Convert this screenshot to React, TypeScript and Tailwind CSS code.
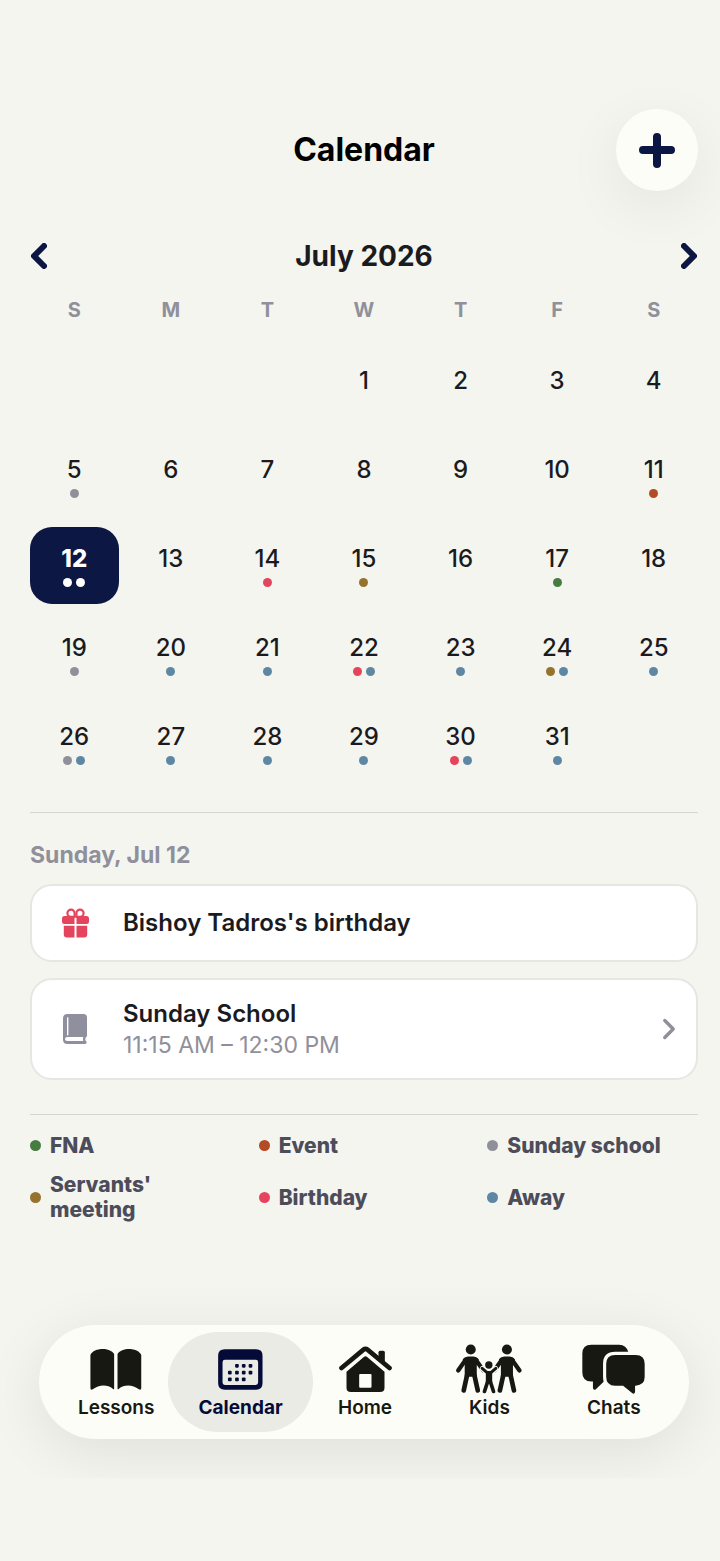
import { useState } from 'react'

type Kind = 'fna' | 'event' | 'school' | 'servants' | 'birthday' | 'away'

const dotColors: Record<Kind, string> = {
    fna: 'bg-[#457c40]',
    event: 'bg-[#b34b24]',
    school: 'bg-[#90909b]',
    servants: 'bg-[#95732c]',
    birthday: 'bg-[#e5445d]',
    away: 'bg-[#5e87a4]',
}

const legend: { kind: Kind; label: string }[] = [
    { kind: 'fna', label: 'FNA' },
    { kind: 'event', label: 'Event' },
    { kind: 'school', label: 'Sunday school' },
    { kind: 'servants', label: "Servants' meeting" },
    { kind: 'birthday', label: 'Birthday' },
    { kind: 'away', label: 'Away' },
]

const weekdays = ['S', 'M', 'T', 'W', 'T', 'F', 'S']

// July 2026 starts on a Wednesday
const leadingBlanks = 3
const daysInMonth = 31

const marks: Record<number, Kind[]> = {
    5: ['school'],
    11: ['event'],
    12: ['birthday', 'school'],
    14: ['birthday'],
    15: ['servants'],
    17: ['fna'],
    19: ['school'],
    20: ['away'],
    21: ['away'],
    22: ['birthday', 'away'],
    23: ['away'],
    24: ['servants', 'away'],
    25: ['away'],
    26: ['school', 'away'],
    27: ['away'],
    28: ['away'],
    29: ['away'],
    30: ['birthday', 'away'],
    31: ['away'],
}

function Chevron({ dir, className }: { dir: 'left' | 'right'; className: string }) {
    return (
        <svg viewBox="0 0 16 26" fill="none" stroke="currentColor" strokeLinecap="round" strokeLinejoin="round" className={className} aria-hidden="true">
            <path d={dir === 'left' ? 'M13 3 3 13l10 10' : 'M3 3l10 10L3 23'} />
        </svg>
    )
}

function GiftIcon() {
    return (
        <svg viewBox="0 0 27 30" className="h-[30px] w-[27px] text-[#e5445d]" fill="currentColor" aria-hidden="true">
            <g fill="none" stroke="currentColor" strokeWidth="2.2">
                <path d="M12.6 8.6V5.2a3.6 3.6 0 1 0-3.6 3.6Z" />
                <path d="M14.4 8.6V5.2A3.6 3.6 0 1 1 18 8.8Z" />
            </g>
            <path d="M2.6 8H12.5v8H2.2Q0 16 0 13.8v-3.2Q0 8 2.6 8Z" />
            <path d="M24.4 8H14.5v8h10.3Q27 16 27 13.8v-3.2Q27 8 24.4 8Z" />
            <path d="M1.8 17.8H12.5v11.7H5q-3.2 0-3.2-3.2Z" />
            <path d="M25.2 17.8H14.5v11.7H22q3.2 0 3.2-3.2Z" />
        </svg>
    )
}

function BookIcon() {
    return (
        <svg viewBox="0 0 24 30" className="h-[30px] w-6 text-[#8f8f9e]" aria-hidden="true">
            <path fill="currentColor" d="M4.5 0h16Q24 0 24 3.5v18q0 1.5-1.4 2.3-.6 1.6.2 3.2 1 .5.9 1.6-.2 1.4-1.6 1.4H4.5Q0 30 0 25.5v-21Q0 0 4.5 0Z" />
            <path fill="#fff" d="M4 3.5q.7-.6 1.4 0v17.7l-1.4.3Z" />
            <path fill="#fff" d="M4.2 23h16.1q-.8 2 0 4H4.2Q2 27 2 25t2.2-2Z" />
        </svg>
    )
}

function LessonsIcon() {
    return (
        <svg viewBox="207 116 151 121" className="h-[41px] w-[52px]" fill="currentColor" aria-hidden="true">
            <path d="M207 134C216 112 264 110 277 131V233Q276 236 273 233C258 220 232 220 214 235Q207 238 207 231Z" />
            <path d="M287 131C300 110 348 112 357 134V231Q357 238 350 235C332 220 306 220 291 233Q288 236 287 233Z" />
        </svg>
    )
}

function CalendarIcon() {
    const dots = [[111, 165], [131, 165], [151, 165], [90, 185], [111, 185], [131, 185], [151, 185], [90, 205], [111, 205], [131, 205]]
    return (
        <svg viewBox="56 116 132 121" className="h-[41px] w-[45px]" fill="currentColor" aria-hidden="true">
            <path fillRule="evenodd" d="M76 117h92q19 0 19 19v81q0 19-19 19H76q-20 0-20-19v-81q0-19 20-19Zm0 31q-7 0-7 7v60q0 7 7 7h91q7 0 7-7v-60q0-7-7-7Z" />
            {dots.map(([x, y]) => <rect key={x + '-' + y} x={x - 5} y={y - 5} width="11" height="11" rx="3" />)}
        </svg>
    )
}

function HomeIcon() {
    return (
        <svg viewBox="425 106 158 138" className="h-[46px] w-[53px]" fill="currentColor" aria-hidden="true">
            <path d="M432 172 498 117q6-5 12 0l66 55" fill="none" stroke="currentColor" strokeWidth="14" strokeLinecap="round" />
            <path d="M543 146v-21q0-5 5-5h9q5 0 5 5v36Z" />
            <path fillRule="evenodd" d="M447 183l52-44q5-4 10 0l52 44v48q0 13-13 13h-88q-13 0-13-13Zm38 10v35q0 3 3 3h31q3 0 3-3v-35q0-3-3-3h-31q-3 0-3 3Z" />
        </svg>
    )
}

function Parent({ cx }: { cx: number }) {
    return (
        <g transform={`translate(${cx} 0)`} strokeLinecap="round" strokeLinejoin="round">
            <circle cx="0" cy="117" r="15" stroke="none" />
            <path d="M-17 150-37 179M17 150 37 179" strokeWidth="13" />
            <path d="M-24 146q6-8 16-8H8q10 0 16 8l-6 18v34h-36v-34Z" stroke="none" />
            <path d="M-11 194-21 239M11 194 21 239" strokeWidth="14" />
        </g>
    )
}

function KidsIcon() {
    return (
        <svg viewBox="84 101 197 148" className="h-[50px] w-[66px]" fill="currentColor" stroke="currentColor" aria-hidden="true">
            <Parent cx={128} />
            <Parent cx={236} />
            {/* the child cuts a light edge out of the parents' hands */}
            <g stroke="#fdfdf8" strokeWidth="16" strokeLinecap="round" fill="none">
                <path d="M163 174l14 12M202 174l-14 12" />
            </g>
            <circle cx="182" cy="163" r="14" fill="#fdfdf8" stroke="none" />
            <circle cx="182" cy="163" r="11" stroke="none" />
            <path d="M162 173l15 13M203 173l-15 13" strokeWidth="9" strokeLinecap="round" fill="none" />
            <path d="M173 181h19v33h-19Z" stroke="none" />
            <path d="M179 211l-10 31M186 211l10 31" strokeWidth="11" strokeLinecap="round" fill="none" />
        </svg>
    )
}

function ChatsIcon() {
    return (
        <svg viewBox="452 101 190 149" className="h-[50px] w-[63px]" fill="currentColor" aria-hidden="true">
            <path d="M480 102h84q22 0 28 23v88h-74l-25 24q-7 4-8-4v-20h-5q-27 0-27-27v-57q0-27 27-27Z" />
            <path d="M552 133h62q27 0 27 27v40q0 24-27 26h-2v19q-2 8-9 3l-27-22h-24q-27 0-27-27v-39q0-27 27-27Z" stroke="#fdfdf8" strokeWidth="19" />
            <path d="M552 133h62q27 0 27 27v40q0 24-27 26h-2v19q-2 8-9 3l-27-22h-24q-27 0-27-27v-39q0-27 27-27Z" />
        </svg>
    )
}

const tabs = [
    { label: 'Lessons', icon: <LessonsIcon /> },
    { label: 'Calendar', icon: <CalendarIcon />, active: true },
    { label: 'Home', icon: <HomeIcon /> },
    { label: 'Kids', icon: <KidsIcon /> },
    { label: 'Chats', icon: <ChatsIcon /> },
]

function Month() {
    const [selected, setSelected] = useState(12)
    const days = Array.from({ length: daysInMonth }, (_, i) => i + 1)

    return (
        <section className="mt-[45px]">
            <div className="flex h-10 items-center justify-between px-px">
                <button type="button" aria-label="Previous month" className="text-[#0b1642]">
                    <Chevron dir="left" className="h-[26px] w-4 stroke-6" />
                </button>
                <h2 className="text-[28px] font-bold text-[#1b1b1f]">July 2026</h2>
                <button type="button" aria-label="Next month" className="text-[#0b1642]">
                    <Chevron dir="right" className="h-[26px] w-4 stroke-6" />
                </button>
            </div>
            <div className="mt-5 grid grid-cols-7 gap-x-2 text-center text-xl leading-7 font-bold text-[#90909b]">
                {weekdays.map((d, i) => <span key={i}>{d}</span>)}
            </div>
            <div className="mt-[25px] grid grid-cols-7 gap-x-2 gap-y-3">
                {Array.from({ length: leadingBlanks }, (_, i) => <span key={'blank' + i} />)}
                {days.map((day) => {
                    const on = day === selected
                    return (
                        <button
                            key={day}
                            type="button"
                            aria-pressed={on}
                            onClick={() => setSelected(day)}
                            className={`flex h-[77px] flex-col items-center rounded-[22px] pt-[17px] ${on ? 'bg-[#0c1743] font-extrabold text-white' : 'font-medium text-[#1b1b1f]'}`}
                        >
                            <span className="text-2xl leading-[30px]">{day}</span>
                            <span className="mt-1 flex gap-1">
                                {(marks[day] || []).map((kind) => (
                                    <span key={kind} className={`size-[9px] rounded-full ${on ? 'bg-white' : dotColors[kind]}`} />
                                ))}
                            </span>
                        </button>
                    )
                })}
            </div>
        </section>
    )
}

function App() {
    return (
        <div className="flex min-h-screen flex-col bg-[#f4f5ef] pb-[83px] font-['Inter',sans-serif]">
            <main className="pt-[109px] pr-[22px] pl-[30px]">
                <header className="grid grid-cols-[1fr_auto_1fr] items-center">
                    <h1 className="col-start-2 text-[32px] font-bold text-black">Calendar</h1>
                    <button type="button" aria-label="Add event" className="flex size-[82px] items-center justify-center justify-self-end rounded-full bg-[#fdfdf8] text-[#0b1642] shadow-[0_16px_60px_rgba(0,0,0,0.07)]">
                        <svg viewBox="0 0 36 36" className="size-9" stroke="currentColor" strokeWidth="8" strokeLinecap="round" aria-hidden="true">
                            <path d="M18 5v27M4 18h28" />
                        </svg>
                    </button>
                </header>

                <Month />

                <section className="mt-[30px] border-t border-[#d5d6d2] pt-7">
                    <h3 className="text-[23px] leading-7 font-bold text-[#90909b]">Sunday, Jul 12</h3>
                    <ul className="mt-[15px] flex flex-col gap-4">
                        <li className="flex min-h-[78px] items-center rounded-[22px] border-2 border-[#e6e7e2] bg-white px-[30px]">
                            <span className="flex w-[61px] shrink-0"><GiftIcon /></span>
                            <p className="text-2xl font-semibold text-[#1b1b1f]">Bishoy Tadros's birthday</p>
                        </li>
                        <li className="flex">
                            <button type="button" className="flex min-h-[102px] w-full items-center rounded-[22px] border-2 border-[#e6e7e2] bg-white pr-5 pl-[31px] text-left">
                                <span className="flex w-[60px] shrink-0"><BookIcon /></span>
                                <span className="flex flex-1 flex-col">
                                    <span className="text-2xl font-semibold text-[#1b1b1f]">Sunday School</span>
                                    <span className="text-[23px] leading-[30px] text-[#90909b]">11:15 AM – 12:30 PM</span>
                                </span>
                                <Chevron dir="right" className="h-[22px] w-[14px] stroke-4 text-[#90909b]" />
                            </button>
                        </li>
                    </ul>
                </section>

                <ul className="mt-[34px] grid grid-cols-3 items-center gap-x-[18px] gap-y-[14px] border-t border-[#d5d6d2] pt-[18px]">
                    {legend.map(({ kind, label }) => (
                        <li key={kind} className="flex items-center gap-[9px] pr-5">
                            <span className={`size-[11px] shrink-0 rounded-full ${dotColors[kind]}`} />
                            <span className="text-[21px] leading-[25px] font-extrabold text-[#4c4c5a]">{label}</span>
                        </li>
                    ))}
                </ul>
            </main>

            {/* the bar's shadow stops at the bottom of this strip */}
            <div className="mt-auto overflow-hidden pt-[100px] pr-[31px] pb-[39px] pl-[39px]">
                <nav className="flex -space-x-5 rounded-full bg-[#fdfdf8] py-[7px] pr-[3px] pl-[5px] shadow-[0_12px_60px_rgba(0,0,0,0.09)]">
                    {tabs.map((tab) => (
                        <a
                            key={tab.label}
                            href="#"
                            aria-current={tab.active ? 'page' : undefined}
                            className={`flex flex-1 flex-col items-center rounded-full pt-3 pb-3 text-[19px] leading-6 ${tab.active ? 'bg-[#eaebe5] font-bold text-[#050b38]' : 'font-semibold text-[#181813]'}`}
                        >
                            <span className="mb-0.5 flex h-[50px] items-center">{tab.icon}</span>
                            {tab.label}
                        </a>
                    ))}
                </nav>
            </div>
        </div>
    )
}

export default App
